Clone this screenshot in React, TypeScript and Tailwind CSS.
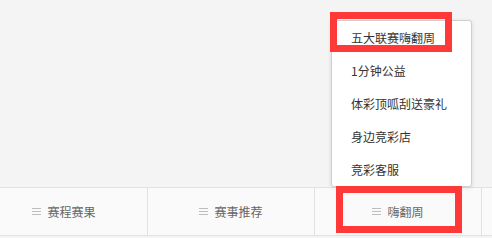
import { Fragment } from "react";

const menuItems = ["五大联赛嗨翻周", "1分钟公益", "体彩顶呱刮送豪礼", "身边竞彩店", "竞彩客服"];

const tabs = ["赛程赛果", "赛事推荐", "嗨翻周", ""];

function MenuIcon() {
  return (
    <span className="flex flex-col gap-[2px] w-[9px]">
      <span className="h-px bg-[#bdbdbd]" />
      <span className="h-px bg-[#bdbdbd]" />
      <span className="h-px bg-[#bdbdbd]" />
    </span>
  );
}

export default function App() {
  return (
    <div
      className="relative w-[492px] h-[238px] bg-[#f4f4f4] flex flex-col overflow-hidden"
      style={{ fontFamily: '"Noto Sans CJK SC", "Noto Sans", sans-serif' }}
    >
      {/* 上方空白区域 + 弹出菜单 */}
      <div className="relative h-[187px] flex-shrink-0">
        <div className="absolute left-[331px] top-[20px] w-[141px] bg-white border border-[#cfcfcf] rounded-[3px] shadow-[0_1px_4px_rgba(0,0,0,0.12)] flex flex-col">
          {menuItems.map((label) => (
            <div key={label} className="h-[33px] flex items-center pl-[19px] text-[12px] text-[#333]">
              {label}
            </div>
          ))}
        </div>
      </div>

      {/* 底部导航 */}
      <div className="h-[49px] flex-shrink-0 bg-[#fafafa] border-t border-b border-[#e2e2e2] flex -ml-[19px]">
        {tabs.map((label, i) => (
          <div
            key={i}
            className="w-[167px] flex-shrink-0 border-r border-[#e2e2e2] flex items-center justify-center gap-[6px] text-[12px] text-[#666]"
          >
            {label && (
              <Fragment>
                <MenuIcon />
                <span>{label}</span>
              </Fragment>
            )}
          </div>
        ))}
      </div>

      {/* 标注红框 */}
      <div className="absolute left-[330px] top-[12px] w-[122px] h-[40px] border-[7px] border-[#ff3838]" />
      <div className="absolute left-[336px] top-[186px] w-[126px] h-[47px] border-[7px] border-[#ff3838]" />
    </div>
  );
}
